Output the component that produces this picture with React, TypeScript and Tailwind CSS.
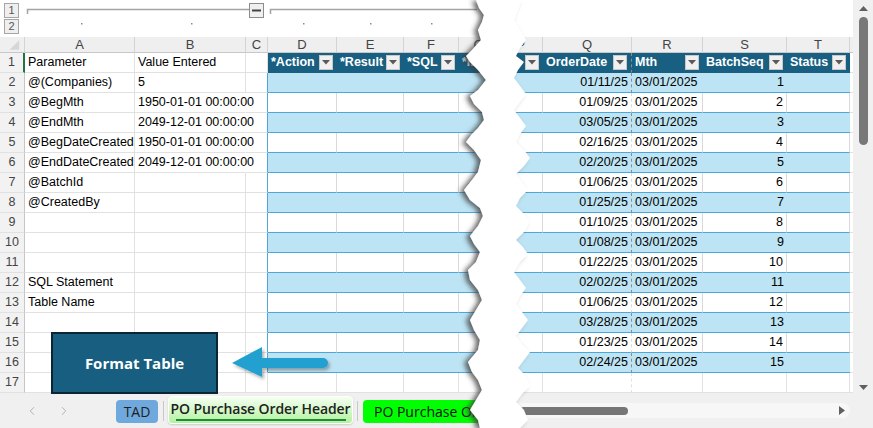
import { ChevronLeft, ChevronRight } from "lucide-react";
import clsx from "clsx";

// column widths: row header, A, B, C, D, E, F, G, P, Q, R, S, T, filler
const colW = [
  "w-[25px]",
  "w-[110px]",
  "w-[111px]",
  "w-[22px]",
  "w-[69px]",
  "w-[67px]",
  "w-[55px]",
  "w-[40px]",
  "w-[44px]",
  "w-[89px]",
  "w-[71px]",
  "w-[84px]",
  "w-[63px]",
  "w-[3px]",
];
const letters = ["", "A", "B", "C", "D", "E", "F", "G", "P", "Q", "R", "S", "T", ""];

const paramA: Record<number, string> = {
  1: "Parameter",
  2: "@(Companies)",
  3: "@BegMth",
  4: "@EndMth",
  5: "@BegDateCreated",
  6: "@EndDateCreated",
  7: "@BatchId",
  8: "@CreatedBy",
  12: "SQL Statement",
  13: "Table Name",
};
const valueB: Record<number, string> = {
  1: "Value Entered",
  2: "5",
  3: "1950-01-01 00:00:00",
  4: "2049-12-01 00:00:00",
  5: "1950-01-01 00:00:00",
  6: "2049-12-01 00:00:00",
};
const tableHeaders = ["*Action", "*Result", "*SQL", "*ID", "", "OrderDate", "Mth", "BatchSeq", "Status"];
const orderDates = [
  "01/11/25", "01/09/25", "03/05/25", "02/16/25", "02/20/25", "01/06/25", "01/25/25", "01/10/25",
  "01/08/25", "01/22/25", "02/02/25", "01/06/25", "03/28/25", "01/23/25", "02/24/25",
];

const rows = Array.from({ length: 17 }, (_, i) => i + 1);

function FilterButton() {
  return (
    <div className="ml-auto mr-[4px] w-[14px] h-[15px] shrink-0 bg-[#f0f0f0] border border-[#c8c8c8] flex items-center justify-center">
      <svg width="8" height="5" viewBox="0 0 8 5">
        <path d="M0 0h8L4 4.5z" fill="#5a5a5a" />
      </svg>
    </div>
  );
}

function OutlineStrip() {
  return (
    <div className="h-[37px] flex bg-white">
      <div className="w-[25px] flex flex-col pl-[4px] pt-[3px] gap-[1px]">
        {["1", "2"].map((n) => (
          <div
            key={n}
            className="w-[15px] h-[15px] border border-[#a6a6a6] bg-[#efefef] text-[11px] leading-none text-[#555] flex items-center justify-center"
          >
            {n}
          </div>
        ))}
      </div>
      <svg width="828" height="37" viewBox="0 0 828 37">
        <path d="M2.5 14V9.5H224" stroke="#a3a3a3" strokeWidth="1.5" fill="none" />
        <rect x="224.5" y="3.5" width="14" height="14" fill="#f0f0f0" stroke="#8c8c8c" />
        <rect x="227" y="9.5" width="9" height="2" fill="#444" />
        <path d="M245.5 14V9.5H452" stroke="#a3a3a3" strokeWidth="1.5" fill="none" />
        {[56, 166, 278, 345, 406].map((x) => (
          <rect key={x} x={x} y="23" width="1.5" height="1.5" fill="#8a8a8a" />
        ))}
      </svg>
    </div>
  );
}

function ColumnHeader() {
  return (
    <div className="h-[16px] flex">
      {colW.map((w, c) => (
        <div
          key={c}
          className={clsx(
            w,
            "h-full shrink-0 bg-[#efefef] border-b border-b-[#c8c8c8] flex items-center justify-center text-[13px] leading-none text-[#444]",
            c < 13 && "border-r border-r-[#d4d4d4]"
          )}
        >
          {c === 0 ? (
            <svg width="25" height="16" viewBox="0 0 25 16">
              <path d="M20 3v10H10z" fill="#d6d6d6" />
            </svg>
          ) : (
            letters[c]
          )}
        </div>
      ))}
    </div>
  );
}

function SheetRow({ r }: { r: number }) {
  const inTable = r <= 16;
  const band = inTable && r >= 2 && r % 2 === 0;

  return (
    <div className="flex h-[20px] text-[12.5px] text-black">
      {colW.map((w, c) => {
        const base = clsx(w, "h-full shrink-0 flex items-center whitespace-nowrap");

        if (c === 0) {
          return (
            <div
              key={c}
              className={clsx(
                base,
                "justify-center bg-[#f2f2f2] text-[#444] border-b border-b-[#e1e1e1]",
                r === 1 ? "border-r-2 border-r-[#217346]" : "border-r border-r-[#c6c6c6]"
              )}
            >
              {r}
            </div>
          );
        }

        if (c === 1) {
          return (
            <div key={c} className={clsx(base, "px-[3px] border-r border-b border-[#e1e1e1]")}>
              {paramA[r]}
            </div>
          );
        }

        if (c === 2) {
          const spills = r >= 3 && r <= 6;
          return (
            <div
              key={c}
              className={clsx(
                base,
                "px-[3px] border-b border-b-[#e1e1e1] border-r",
                spills ? "border-r-transparent" : "border-r-[#e1e1e1]"
              )}
            >
              {valueB[r]}
            </div>
          );
        }

        if (c === 3) {
          return (
            <div
              key={c}
              className={clsx(
                base,
                "border-b border-b-[#e1e1e1] border-r",
                r >= 2 && r <= 16 ? "border-r-[#4ea7d9]" : "border-r-[#e1e1e1]"
              )}
            />
          );
        }

        if (c === 13) {
          return <div key={c} className={clsx(base, "border-b border-b-[#e1e1e1]")} />;
        }

        const isQ = c === 9;
        let content: React.ReactNode = null;
        if (r === 1) {
          content = (
            <>
              <span className="pl-[3px] font-bold text-white">{tableHeaders[c - 4]}</span>
              <FilterButton />
            </>
          );
        } else if (inTable) {
          if (c === 9) content = <span className="ml-auto pr-[3px]">{orderDates[r - 2]}</span>;
          if (c === 10) content = <span className="pl-[3px]">03/01/2025</span>;
          if (c === 11) content = <span className="ml-auto pr-[3px]">{r - 1}</span>;
        }

        return (
          <div
            key={c}
            className={clsx(
              base,
              "border-b",
              r === 1 && "bg-[#185f82] border-b-[#185f82]",
              band && "bg-[#bde4f4] border-b-[#4ea7d9]",
              inTable && !band && r > 1 && "bg-white border-b-[#4ea7d9] border-r border-r-[#d9d9d9]",
              !inTable && "border-b-[#e1e1e1] border-r border-r-[#e1e1e1]",
              isQ && "border-r border-r-[#8c8c8c] [border-right-style:dashed]"
            )}
          >
            {content}
          </div>
        );
      })}
    </div>
  );
}

function VerticalScroll() {
  return (
    <div className="w-[20px] h-full bg-[#f0f0f0] flex flex-col items-center pt-[6px] pb-[3px]">
      <svg width="9" height="5" viewBox="0 0 9 5">
        <path d="M0 5h9L4.5 0z" fill="#606060" />
      </svg>
      <div className="mt-[6px] w-[9px] h-[128px] rounded-full bg-[#787878]" />
      <div className="flex-1" />
      <svg width="9" height="5" viewBox="0 0 9 5">
        <path d="M0 0h9L4.5 5z" fill="#606060" />
      </svg>
    </div>
  );
}

function TabBar() {
  return (
    <div className="h-[35px] flex bg-[#f0f0f0] font-['Open_Sans','Noto_Sans',sans-serif]">
      <div className="w-[505px] shrink-0 flex">
        <div className="w-[116px] shrink-0 flex items-center pl-[25px] gap-[18px] text-[#a8a8a8]">
          <ChevronLeft size={14} strokeWidth={1.5} />
          <ChevronRight size={14} strokeWidth={1.5} />
        </div>
        <div className="mt-[7px] w-[42px] h-[23px] shrink-0 rounded-[4px] bg-[#6fa8dc] flex items-center justify-center text-[14px] text-[#1e1e1e]">
          TAD
        </div>
        <div className="ml-[5px] mt-[8px] w-px h-[20px] bg-[#c8c8c8] shrink-0" />
        <div className="ml-[4px] mt-[3px] w-[185px] h-[28px] shrink-0 rounded-[4px] border border-white bg-gradient-to-b from-[#f4fff1] to-[#b2f29e] shadow-[0_1px_2px_rgba(0,0,0,0.15)] flex flex-col items-center justify-center">
          <span className="text-[14px] font-semibold text-[#222] leading-[18px] tracking-[-0.1px] whitespace-nowrap">
            PO Purchase Order Header
          </span>
          <div className="mt-[1px] h-[2px] w-[170px] bg-[#1f8a3a]" />
        </div>
        <div className="ml-[4px] mt-[8px] w-px h-[20px] bg-[#c8c8c8] shrink-0" />
        <div className="ml-[5px] mt-[7px] w-[137px] h-[23px] shrink-0 rounded-[4px] bg-[#00ff00] flex items-center pl-[11px] text-[14px] text-[#111] whitespace-nowrap">
          PO Purchase Order
        </div>
      </div>
      <div className="flex-1 flex items-center pr-[3px]">
        <div className="w-full h-[15px] rounded-full bg-[#f7f7f7] flex items-center">
          <div className="ml-[15px] w-[108px] h-[8px] rounded-full bg-[#767676]" />
          <svg className="ml-auto mr-[5px]" width="6" height="9" viewBox="0 0 6 9">
            <path d="M0 0v9l6-4.5z" fill="#606060" />
          </svg>
        </div>
      </div>
      <div className="w-[20px] shrink-0" />
    </div>
  );
}

// torn paper edge between the two halves of the sheet
const leftEdge = [
  [476, 0], [479, 8], [484, 15], [482, 22], [478, 30], [481, 40], [472, 50], [466, 56], [470, 62], [478, 70],
  [486, 80], [478, 90], [470, 96], [474, 104], [482, 112], [484, 120], [478, 128], [472, 134], [466, 142],
  [474, 150], [481, 160], [478, 172], [472, 180], [464, 190], [470, 200], [480, 208], [483, 216], [478, 226],
  [470, 236], [474, 244], [480, 252], [476, 262], [468, 270], [470, 280], [478, 290], [482, 300], [476, 310],
  [470, 320], [474, 330], [480, 340], [478, 350], [468, 362], [472, 372], [478, 380], [482, 390], [476, 400],
  [470, 410], [478, 420], [480, 428],
];
const rightEdge = [
  [520, 428], [528, 420], [524, 410], [516, 402], [522, 394], [530, 386], [526, 376], [518, 368], [524, 360],
  [530, 352], [522, 344], [516, 336], [522, 328], [528, 320], [522, 312], [516, 304], [520, 296], [526, 288],
  [520, 280], [514, 272], [520, 262], [528, 254], [522, 246], [516, 240], [524, 232], [530, 222], [524, 214],
  [516, 206], [520, 198], [528, 190], [522, 182], [516, 174], [524, 166], [530, 158], [524, 150], [516, 142],
  [520, 134], [526, 126], [520, 118], [514, 110], [520, 102], [526, 94], [520, 86], [514, 78], [518, 70],
  [524, 62], [516, 56], [520, 48], [526, 40], [520, 30], [514, 20], [518, 10], [522, 0],
];

function Tear() {
  const d =
    "M" + [...leftEdge, ...rightEdge].map(([x, y]) => `${x} ${y}`).join(" L") + " Z";
  return (
    <svg className="absolute inset-0 pointer-events-none" width="873" height="428" viewBox="0 0 873 428">
      <defs>
        <filter id="tearShadow" x="-20%" y="-5%" width="140%" height="110%">
          <feDropShadow dx="-4" dy="1" stdDeviation="2.5" floodColor="#3a3a3a" floodOpacity="0.75" />
        </filter>
      </defs>
      <path d={d} fill="#ffffff" filter="url(#tearShadow)" />
    </svg>
  );
}

export default function App() {
  return (
    <div className="relative w-[873px] h-[428px] overflow-hidden bg-white font-['Liberation_Sans',Arial,sans-serif]">
      <div className="flex h-[393px]">
        <div className="w-[853px] flex flex-col">
          <OutlineStrip />
          <ColumnHeader />
          {rows.map((r) => (
            <SheetRow key={r} r={r} />
          ))}
        </div>
        <VerticalScroll />
      </div>
      <TabBar />

      {/* shape button placed over the grid */}
      <div className="absolute left-[51px] top-[332px] w-[167px] h-[62px] bg-[#175e80] border-2 border-[#0c2533] flex items-center justify-center text-white font-bold text-[15px] font-['Open_Sans',sans-serif]">
        Format Table
      </div>
      <svg className="absolute left-[228px] top-[343px]" width="108" height="42" viewBox="0 0 108 42">
        <defs>
          <filter id="arrowShadow" x="-10%" y="-20%" width="130%" height="150%">
            <feDropShadow dx="2" dy="2.5" stdDeviation="1.5" floodColor="#000" floodOpacity="0.3" />
          </filter>
        </defs>
        <g filter="url(#arrowShadow)" fill="#22a0d0">
          <path d="M4 20L34 4V34Z" />
          <rect x="30" y="15" width="70" height="10" rx="5" />
        </g>
      </svg>

      <Tear />
    </div>
  );
}
